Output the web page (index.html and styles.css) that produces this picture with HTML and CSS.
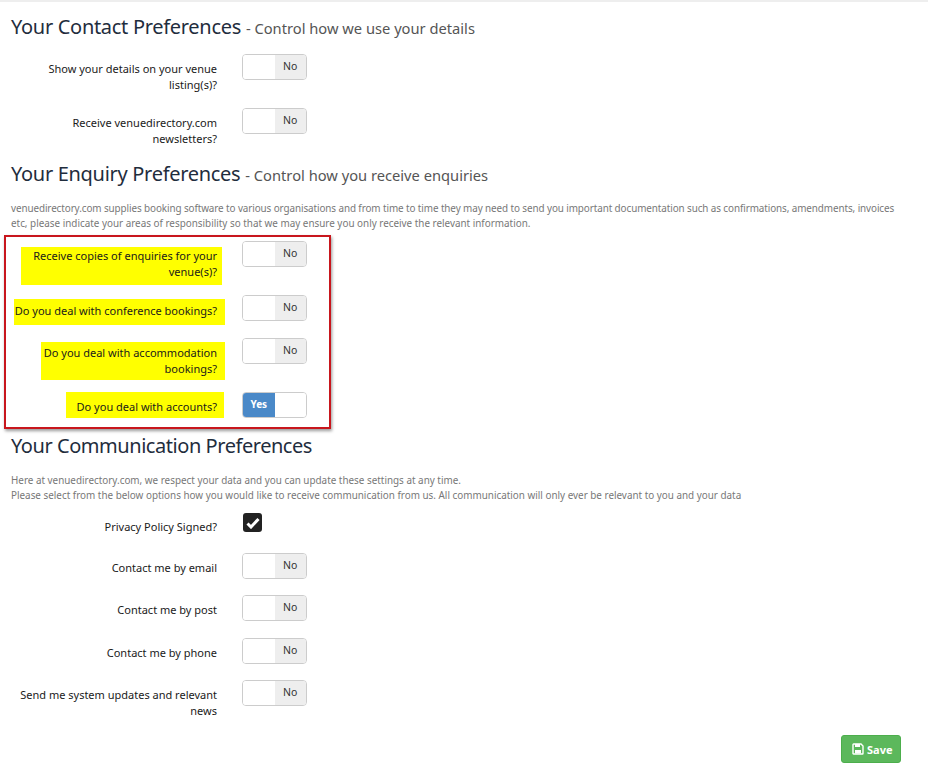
FILE: index.html
```html
<!DOCTYPE html>
<html lang="en">
<head>
    <meta charset="UTF-8">
    <meta name="viewport" content="width=device-width, initial-scale=1.0">
    <title>Preferences</title>
    <link rel="stylesheet" href="styles.css">
</head>
<body>
<div class="page">
    <h2 class="heading first">Your Contact Preferences <small>- Control how we use your details</small></h2>
    <div class="row h54 r-first">
        <label class="label">Show your details on your venue listing(s)?</label>
        <div class="toggle"><span class="blank"></span><span class="off">No</span></div>
    </div>
    <div class="row h53">
        <label class="label">Receive venuedirectory.com newsletters?</label>
        <div class="toggle"><span class="blank"></span><span class="off">No</span></div>
    </div>

    <h2 class="heading">Your Enquiry Preferences <small>- Control how you receive enquiries</small></h2>
    <p class="intro">
        <span class="line tight">venuedirectory.com supplies booking software to various organisations and from time to time they may need to send you important documentation such as confirmations, amendments, invoices</span>
        <span class="line">etc, please indicate your areas of responsibility so that we may ensure you only receive the relevant information.</span>
    </p>

    <div class="redbox">
        <div class="row h54">
            <label class="label plain"><mark class="hl hl-1">Receive copies of enquiries for your venue(s)?</mark></label>
            <div class="toggle"><span class="blank"></span><span class="off">No</span></div>
        </div>
        <div class="row h43">
            <label class="label plain"><mark class="hl hl-2">Do you deal with conference bookings?</mark></label>
            <div class="toggle"><span class="blank"></span><span class="off">No</span></div>
        </div>
        <div class="row h54">
            <label class="label plain"><mark class="hl hl-3">Do you deal with accommodation bookings?</mark></label>
            <div class="toggle"><span class="blank"></span><span class="off">No</span></div>
        </div>
        <div class="row">
            <label class="label plain"><mark class="hl hl-4">Do you deal with accounts?</mark></label>
            <div class="toggle"><span class="on">Yes</span><span class="blank"></span></div>
        </div>
    </div>

    <h2 class="heading third">Your Communication Preferences</h2>
    <p class="intro">Here at venuedirectory.com, we respect your data and you can update these settings at any time.<br>Please select from the below options how you would like to receive communication from us. All communication will only ever be relevant to you and your data</p>

    <div class="row h40 r-privacy">
        <label class="label label-privacy">Privacy Policy Signed?</label>
        <div class="check">
            <svg width="14" height="12" viewBox="0 0 14 12"><path d="M1.5 6.5 L5 10 L12.5 2" fill="none" stroke="#fff" stroke-width="3"/></svg>
        </div>
    </div>
    <div class="row h42">
        <label class="label">Contact me by email</label>
        <div class="toggle"><span class="blank"></span><span class="off">No</span></div>
    </div>
    <div class="row h43">
        <label class="label">Contact me by post</label>
        <div class="toggle"><span class="blank"></span><span class="off">No</span></div>
    </div>
    <div class="row h42">
        <label class="label">Contact me by phone</label>
        <div class="toggle"><span class="blank"></span><span class="off">No</span></div>
    </div>
    <div class="row h55">
        <label class="label">Send me system updates and relevant news</label>
        <div class="toggle"><span class="blank"></span><span class="off">No</span></div>
    </div>

    <div class="actions">
        <button class="save" type="button">
            <svg width="12" height="12" viewBox="0 0 12 12"><path d="M1.5 1h7.5l2 2v7.5a.5.5 0 0 1-.5.5h-9a.5.5 0 0 1-.5-.5v-9a.5.5 0 0 1 .5-.5z" fill="none" stroke="#fff" stroke-width="1.4"/><rect x="3" y="1" width="5" height="3" fill="#fff"/><rect x="3" y="7" width="6" height="3.5" fill="#fff"/></svg>
            Save
        </button>
    </div>
</div>
</body>
</html>
```

FILE: styles.css
```css
* {
    box-sizing: border-box;
}
body {
    margin: 0;
    background-color: #fff;
    font-family: "Noto Sans", sans-serif;
    font-size: 11px;
    color: #1a1a1a;
}
.page {
    height: 768px;
    overflow: hidden;
    border-top: 2px solid #eee;
    padding: 0 11px;
}
.heading {
    margin: 0;
    font-weight: normal;
    font-size: 20px;
    letter-spacing: -0.3px;
    line-height: 26px;
    color: #1f2d3d;
}
.heading small {
    font-size: 14.7px;
    letter-spacing: 0;
    line-height: 1;
    color: #555;
}
.heading.first {
    padding-top: 12px;
}
.heading.third {
    margin-top: 4px;
    letter-spacing: -0.45px;
}
.intro {
    margin: 14px 0 0;
    font-size: 9.9px;
    line-height: 15px;
    color: #777;
}
.line {
    display: block;
}
.tight {
    letter-spacing: -0.09px;
}
.row {
    display: grid;
    grid-template-columns: 206px 65px;
    column-gap: 25px;
    align-items: start;
}
.h40 { height: 40px; }
.h42 { height: 42px; }
.h43 { height: 43px; }
.h53 { height: 53px; }
.h54 { height: 54px; }
.h55 { height: 55px; }
.r-first {
    margin-top: 14px;
}
.r-privacy {
    margin-top: 10px;
}
.label {
    text-align: right;
    line-height: 16px;
    padding-top: 7px;
}
.label.plain {
    padding-top: 0;
}
.label.label-privacy {
    padding-top: 6px;
}
.toggle {
    display: flex;
    width: 65px;
    height: 26px;
    border: 1px solid #ccc;
    border-radius: 4px;
    overflow: hidden;
    font-size: 10.5px;
    line-height: 22px;
    text-align: center;
}
.toggle span {
    flex: 1;
}
.off {
    background-color: #eee;
    color: #333;
}
.on {
    background-color: #4a89c8;
    color: #fff;
    font-size: 10px;
    font-weight: bold;
}
.blank {
    background-color: #fff;
}
.redbox {
    width: 327px;
    height: 194px;
    margin: 4px 0 0 -7px;
    padding: 4px 0 0 5px;
    border: 2px solid #c8161d;
    box-shadow: 1px 2px 3px rgba(0, 0, 0, 0.4);
}
.hl {
    display: inline-block;
    background-color: #ff0;
    color: #1a1a1a;
    vertical-align: top;
}
.hl-1 {
    width: 201px;
    margin: 6px -5px 0 0;
    padding: 1px 5px 5px 0;
}
.hl-2 {
    margin: 4px -8px 0 0;
    padding: 4px 8px 6px 1px;
    white-space: nowrap;
}
.hl-3 {
    width: 184px;
    margin: 4px -8px 0 0;
    padding: 3px 8px 3px 0;
}
.hl-4 {
    padding: 7px 7px 3px 11px;
    margin-right: -7px;
}
.check {
    display: flex;
    align-items: center;
    justify-content: center;
    width: 19px;
    height: 19px;
    margin-left: 1px;
    background-color: #222;
    border-radius: 3px;
}
.actions {
    display: flex;
    justify-content: flex-end;
    padding-right: 16px;
}
.save {
    display: flex;
    align-items: center;
    gap: 3px;
    width: 60px;
    height: 28px;
    padding: 0 0 0 10px;
    border: 1px solid #4cae4c;
    border-radius: 3px;
    background-color: #5cb85c;
    color: #fff;
    font-family: inherit;
    font-size: 11px;
    font-weight: bold;
}
```
